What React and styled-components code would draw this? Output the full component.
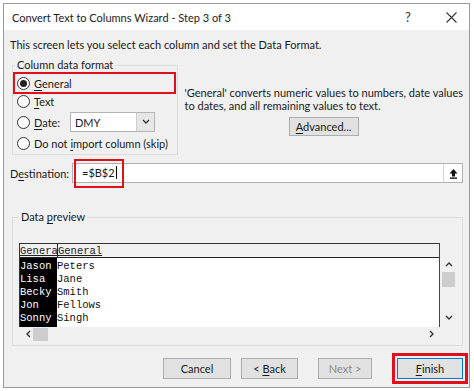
import React from 'react';
import styled, { createGlobalStyle } from 'styled-components';

const Global = createGlobalStyle`
  html, body { margin: 0; padding: 0; background: #ffffff; }
  body { font-family: Lato, "Noto Sans", sans-serif; font-size: 11px; color: #1a1a1a; }
`;

const Frame = styled.div`
  box-sizing: border-box;
  width: 467px;
  height: 385px;
  margin: 3px 0 0 3px;
  border: 1px solid #9a9a9a;
  background: #f0f0f0;
  display: flex;
  flex-direction: column;
`;

const TitleBar = styled.div`
  height: 26px;
  flex-shrink: 0;
  background: #ffffff;
  display: flex;
  align-items: center;
  padding-left: 8px;
  color: #222;
`;

const TitleText = styled.div`
  flex: 1;
`;

const TitleBtn = styled.div`
  width: ${(p) => p.$w}px;
  display: flex;
  justify-content: center;
  font-size: 13px;
  color: #333;
`;

const Body = styled.div`
  padding: 7px 6px 0 6px;
  display: flex;
  flex-direction: column;
`;

const Intro = styled.div`
  line-height: 16px;
`;

const FormatRow = styled.div`
  display: flex;
  margin-top: 5px;
`;

const GroupBox = styled.fieldset`
  margin: 0 0 0 2px;
  min-width: 0;
  padding: 2px 2px 0 2px;
  border: 1px solid #dcdcdc;
  width: 166px;
  box-sizing: border-box;
`;

const Legend = styled.legend`
  padding: 0 2px;
  font-size: 11px;
  line-height: 14px;
`;

const RadioRow = styled.div`
  display: flex;
  align-items: center;
  height: ${(p) => p.$h}px;
  padding-left: 2px;
  box-sizing: border-box;
  outline: ${(p) => (p.$hl ? '2px solid #e0101a' : 'none')};
  margin-right: 1px;
  white-space: nowrap;
`;

const Radio = styled.span`
  width: 13px;
  height: 13px;
  border-radius: 50%;
  border: 1px solid #333;
  background: #fff;
  box-sizing: border-box;
  display: flex;
  align-items: center;
  justify-content: center;
  margin-right: 4px;
  flex-shrink: 0;
  &::after {
    content: '';
    width: 7px;
    height: 7px;
    border-radius: 50%;
    background: ${(p) => (p.$on ? '#222' : 'transparent')};
  }
`;

const U = styled.span`
  text-decoration: underline;
  text-underline-offset: 2px;
`;

const DateLabel = styled.span`
  width: 36px;
`;

const Select = styled.div`
  width: 85px;
  height: 20px;
  border: 1px solid #b5b5b5;
  background: #fff;
  box-sizing: border-box;
  display: flex;
  align-items: center;
  padding-left: 4px;
`;

const SelectValue = styled.span`
  flex: 1;
`;

const SelectArrow = styled.span`
  width: 17px;
  height: 18px;
  border-left: 1px solid #cfcfcf;
  background: #e6e6e6;
  display: flex;
  align-items: center;
  justify-content: center;
`;

const Explain = styled.div`
  flex: 1;
  padding: 28px 0 0 7px;
  line-height: 13px;
  display: flex;
  flex-direction: column;
  white-space: nowrap;
`;

const Button = styled.div`
  box-sizing: border-box;
  width: ${(p) => p.$w}px;
  height: ${(p) => p.$h || 21}px;
  margin-left: ${(p) => p.$ml || 0}px;
  background: #e1e1e1;
  border: 1px solid ${(p) => (p.$def ? '#0078d7' : '#adadad')};
  display: flex;
  align-items: center;
  justify-content: center;
  color: ${(p) => (p.$off ? '#8a8a8a' : '#1a1a1a')};
  outline: ${(p) => (p.$hl ? '3px solid #e0101a' : 'none')};
  outline-offset: 2px;
`;

const AdvWrap = styled.div`
  display: flex;
  padding-left: 104px;
  margin-top: 5px;
`;

const DestRow = styled.div`
  display: flex;
  align-items: center;
  margin-top: 8px;
  height: 20px;
`;

const DestLabel = styled.div`
  width: 62px;
`;

const DestInput = styled.div`
  flex: 1;
  height: 20px;
  box-sizing: border-box;
  border: 1px solid #b0b0b0;
  background: #fff;
  display: flex;
  align-items: center;
`;

const DestValue = styled.div`
  width: 50px;
  height: 29px;
  margin: 1px 0 0 1px;
  box-sizing: border-box;
  border: 2px solid #e0101a;
  padding: 0 0 2px 6px;
  display: flex;
  align-items: center;
`;

const Caret = styled.span`
  display: inline-block;
  width: 1px;
  height: 13px;
  background: #000;
  margin-left: 1px;
`;

const Grow = styled.div`
  flex: 1;
`;

const UpBtn = styled.div`
  width: 18px;
  height: 18px;
  border-left: 1px solid #d6d6d6;
  display: flex;
  align-items: center;
  justify-content: center;
`;

const PreviewGroup = styled.fieldset`
  margin: 27px 0 0 2px;
  min-width: 0;
  padding: 0 6px 4px 6px;
  border: 1px solid #dcdcdc;
  box-sizing: border-box;
`;

const PreviewInner = styled.div`
  display: flex;
  margin-top: 19px;
`;

const Grid = styled.div`
  width: 421px;
  height: 84px;
  background: #fff;
  border-left: 1px solid #333;
  border-right: 1px solid #444;
  border-top: 1px solid #333;
  box-sizing: border-box;
  font-family: "Liberation Mono", "Courier New", monospace;
  font-size: 10.5px;
  display: flex;
  flex-direction: column;
  overflow: hidden;
`;

const GridHead = styled.div`
  display: flex;
  height: 13px;
  flex-shrink: 0;
  border-bottom: 1px solid #222;
  background: #f0f0f0;
  line-height: 15px;
`;

const GridBody = styled.div`
  display: flex;
  flex: 1;
  padding-top: 2px;
`;

const Col = styled.div`
  width: ${(p) => (p.$w ? `${p.$w}px` : 'auto')};
  flex: ${(p) => (p.$w ? 'none' : 1)};
  background: ${(p) => (p.$sel ? '#000' : 'transparent')};
  color: ${(p) => (p.$sel ? '#fff' : '#111')};
  margin-top: ${(p) => (p.$sel ? -2 : 0)}px;
  padding-top: ${(p) => (p.$sel ? 2 : 0)}px;
  overflow: hidden;
  white-space: nowrap;
  line-height: 13px;
`;

const HeadCell = styled.div`
  width: ${(p) => (p.$w ? `${p.$w}px` : 'auto')};
  flex: ${(p) => (p.$w ? 'none' : 1)};
  border-right: ${(p) => (p.$w ? '1px solid #222' : 'none')};
  box-sizing: border-box;
  overflow: hidden;
  white-space: nowrap;
  text-decoration: underline;
  text-underline-offset: 1px;
  color: #222;
`;

const VScroll = styled.div`
  width: 13px;
  height: 84px;
  margin-left: 2px;
  display: flex;
  flex-direction: column;
  align-items: center;
  padding: 18px 0 6px;
  box-sizing: border-box;
`;

const Thumb = styled.div`
  width: ${(p) => p.$w}px;
  height: ${(p) => p.$h}px;
  margin-top: ${(p) => p.$mt || 0}px;
  background: #cdcdcd;
`;

const Arrow = styled.svg`
  display: block;
  flex-shrink: 0;
`;

const HScroll = styled.div`
  display: flex;
  align-items: center;
  height: 14px;
  width: 421px;
  padding: 0 5px 0 6px;
  box-sizing: border-box;
  gap: 2px;
`;

const Footer = styled.div`
  display: flex;
  justify-content: flex-end;
  padding-top: 12px;
  align-items: center;
`;

const ChevUp = () => (
  <Arrow width="8" height="6" viewBox="0 0 8 6">
    <path d="M1 5 L4 2 L7 5" fill="none" stroke="#333" strokeWidth="1.4" />
  </Arrow>
);
const ChevDown = () => (
  <Arrow width="8" height="6" viewBox="0 0 8 6">
    <path d="M1 1 L4 4 L7 1" fill="none" stroke="#333" strokeWidth="1.4" />
  </Arrow>
);
const ChevLeft = () => (
  <Arrow width="6" height="8" viewBox="0 0 6 8">
    <path d="M5 1 L2 4 L5 7" fill="none" stroke="#333" strokeWidth="1.4" />
  </Arrow>
);
const ChevRight = () => (
  <Arrow width="6" height="8" viewBox="0 0 6 8">
    <path d="M1 1 L4 4 L1 7" fill="none" stroke="#333" strokeWidth="1.4" />
  </Arrow>
);

const rowsA = ['Jason', 'Lisa', 'Becky', 'Jon', 'Sonny'];
const rowsB = ['Peters', 'Jane', 'Smith', 'Fellows', 'Singh'];

export default function App() {
  return (
    <>
      <Global />
      <Frame>
        <TitleBar>
          <TitleText>Convert Text to Columns Wizard - Step 3 of 3</TitleText>
          <TitleBtn $w={50}>?</TitleBtn>
          <TitleBtn $w={36}>
            <svg width="11" height="11" viewBox="0 0 11 11">
              <path d="M0.5 0.5 L10.5 10.5 M10.5 0.5 L0.5 10.5" stroke="#333" strokeWidth="1.1" />
            </svg>
          </TitleBtn>
        </TitleBar>
        <Body>
          <Intro>This screen lets you select each column and set the Data Format.</Intro>
          <FormatRow>
            <GroupBox>
              <Legend>Column data format</Legend>
              <RadioRow $hl $h={18}>
                <Radio $on />
                <span><U>G</U>eneral</span>
              </RadioRow>
              <RadioRow $h={19}>
                <Radio />
                <span><U>T</U>ext</span>
              </RadioRow>
              <RadioRow $h={22}>
                <Radio />
                <DateLabel><U>D</U>ate:</DateLabel>
                <Select>
                  <SelectValue>DMY</SelectValue>
                  <SelectArrow><ChevDown /></SelectArrow>
                </Select>
              </RadioRow>
              <RadioRow $h={21}>
                <Radio />
                <span>Do not <U>i</U>mport column (skip)</span>
              </RadioRow>
            </GroupBox>
            <Explain>
              <div>'General' converts numeric values to numbers, date values</div>
              <div>to dates, and all remaining values to text.</div>
              <AdvWrap>
                <Button $w={70} $h={19}><span><U>A</U>dvanced...</span></Button>
              </AdvWrap>
            </Explain>
          </FormatRow>
          <DestRow>
            <DestLabel>D<U>e</U>stination:</DestLabel>
            <DestInput>
              <DestValue>=$B$2<Caret /></DestValue>
              <Grow />
              <UpBtn>
                <svg width="9" height="11" viewBox="0 0 9 11">
                  <path d="M4.5 1 L8.5 5.5 L6 5.5 L6 8.5 L3 8.5 L3 5.5 L0.5 5.5 Z" fill="#111" />
                  <rect x="1" y="9.4" width="7" height="1.4" fill="#111" />
                </svg>
              </UpBtn>
            </DestInput>
          </DestRow>
          <PreviewGroup>
            <Legend>Data <U>p</U>review</Legend>
            <PreviewInner>
              <Grid>
                <GridHead>
                  <HeadCell $w={38}>General</HeadCell>
                  <HeadCell>General</HeadCell>
                </GridHead>
                <GridBody>
                  <Col $w={37} $sel>
                    {rowsA.map((r) => (
                      <div key={r}>{r}</div>
                    ))}
                  </Col>
                  <Col>
                    {rowsB.map((r) => (
                      <div key={r}>{r}</div>
                    ))}
                  </Col>
                </GridBody>
              </Grid>
              <VScroll>
                <ChevUp />
                <Thumb $w={13} $h={15} $mt={5} />
                <Grow />
                <ChevDown />
              </VScroll>
            </PreviewInner>
            <HScroll>
              <ChevLeft />
              <Thumb $w={15} $h={13} />
              <Grow />
              <ChevRight />
            </HScroll>
          </PreviewGroup>
          <Footer>
            <Button $w={68}>Cancel</Button>
            <Button $w={57} $ml={10}><span>&lt; <U>B</U>ack</span></Button>
            <Button $w={54} $ml={20} $off>Next &gt;</Button>
            <Button $w={66} $ml={25} $def $hl><span><U>F</U>inish</span></Button>
          </Footer>
        </Body>
      </Frame>
    </>
  );
}
